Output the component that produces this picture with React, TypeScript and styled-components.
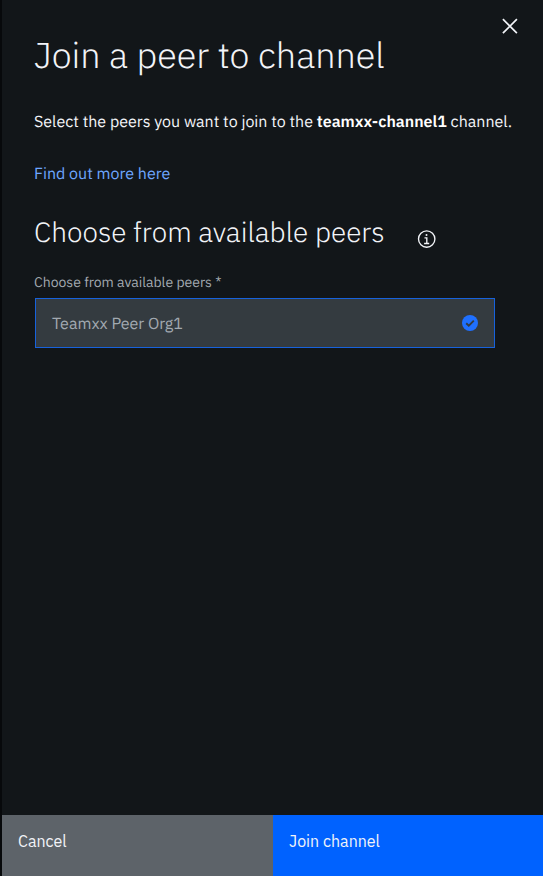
import React from "react";
import styled, { createGlobalStyle } from "styled-components";

const GlobalStyle = createGlobalStyle`
  *, *::before, *::after { box-sizing: border-box; }
  body { margin: 0; background: #080b0d; }
`;

const Panel = styled.main`
  display: flex;
  flex-direction: column;
  height: 100vh;
  min-height: 876px;
  background: #121619;
  border-left: 2px solid #07090b;
  color: #f2f4f8;
  font-family: "IBM Plex Sans", Roboto, "Liberation Sans", sans-serif;
  font-size: 16px;
  line-height: 24px;
  white-space: nowrap;
  text-rendering: geometricPrecision;
`;

const Header = styled.header`
  display: flex;
  justify-content: space-between;
  align-items: flex-start;
  height: 110px;
  padding: 16px 23px 0 32px;
`;

const Title = styled.h1`
  margin: 15px 0 0;
  font-size: 36px;
  font-weight: 300;
  line-height: 48px;
`;

const IconButton = styled.button`
  display: flex;
  padding: 0;
  border: 0;
  background: none;
  color: #f2f4f8;
`;

const Content = styled.section`
  flex: 1;
  padding: 0 48px 0 32px;
`;

const Description = styled.p`
  margin: 0 0 28px;
`;

const Channel = styled.strong`
  font-weight: 600;
  color: #ffffff;
`;

const Link = styled.a`
  display: block;
  color: #6ea6ff;
  text-decoration: none;
`;

const SectionHeading = styled.div`
  display: flex;
  align-items: flex-start;
  height: 57px;
  margin-top: 28px;
`;

const SectionTitle = styled.h2`
  width: 383px;
  margin: 0;
  font-size: 28px;
  font-weight: 300;
  line-height: 36px;
`;

const InfoButton = styled(IconButton)`
  margin-top: 16px;
`;

const Label = styled.label`
  display: block;
  height: 27px;
  font-size: 14px;
  line-height: 22px;
  color: #a2a9b0;
`;

const PeerTile = styled.div`
  display: flex;
  align-items: center;
  justify-content: space-between;
  width: 460px;
  height: 50px;
  margin-left: 1px;
  padding: 0 16px;
  border: 1px solid #1762dc;
  background: #343b40;
  color: #a2a9b0;
`;

const PeerName = styled.span`
  padding-top: 2px;
`;

const Footer = styled.footer`
  display: grid;
  grid-template-columns: 271px 1fr;
  height: 61px;
`;

const Action = styled.button<{ $primary?: boolean }>`
  padding: 14px 16px 0;
  display: flex;
  align-items: flex-start;
  border: 0;
  background: ${({ $primary }) => ($primary ? "#0062ff" : "#5d6369")};
  color: #f2f4f8;
  font: inherit;
`;

export default function App() {
  return (
    <>
      <GlobalStyle />
      <Panel>
        <Header>
          <Title>Join a peer to channel</Title>
          <IconButton aria-label="Close">
            <svg width="20" height="20" viewBox="0 0 20 20" fill="none" stroke="currentColor" strokeWidth="1.7">
              <path d="M2.9 3.2 16.9 17.2M16.9 3.2 2.9 17.2" />
            </svg>
          </IconButton>
        </Header>
        <Content>
          <Description>
            Select the peers you want to join to the <Channel>teamxx-channel1</Channel> channel.
          </Description>
          <Link>Find out more here</Link>
          <SectionHeading>
            <SectionTitle>Choose from available peers</SectionTitle>
            <InfoButton aria-label="Information">
              <svg width="19" height="19" viewBox="0 0 19 19" fill="none" stroke="currentColor" strokeWidth="1.35">
                <circle cx="9.7" cy="9" r="8.2" />
                <path d="M7.5 7.9h2.3v5.6M7.1 13.5h5.1" />
                <circle cx="9.5" cy="4.9" r="1" fill="currentColor" stroke="none" />
              </svg>
            </InfoButton>
          </SectionHeading>
          <Label>Choose from available peers *</Label>
          <PeerTile>
            <PeerName>Teamxx Peer Org1</PeerName>
            <svg width="16" height="16" viewBox="0 0 16 16" fill="none">
              <circle cx="8" cy="8" r="8" fill="#1f70ff" />
              <path d="m4.2 8.2 2.6 2.5 5-5" stroke="#343b40" strokeWidth="1.9" />
            </svg>
          </PeerTile>
        </Content>
        <Footer>
          <Action>Cancel</Action>
          <Action $primary>Join channel</Action>
        </Footer>
      </Panel>
    </>
  );
}
